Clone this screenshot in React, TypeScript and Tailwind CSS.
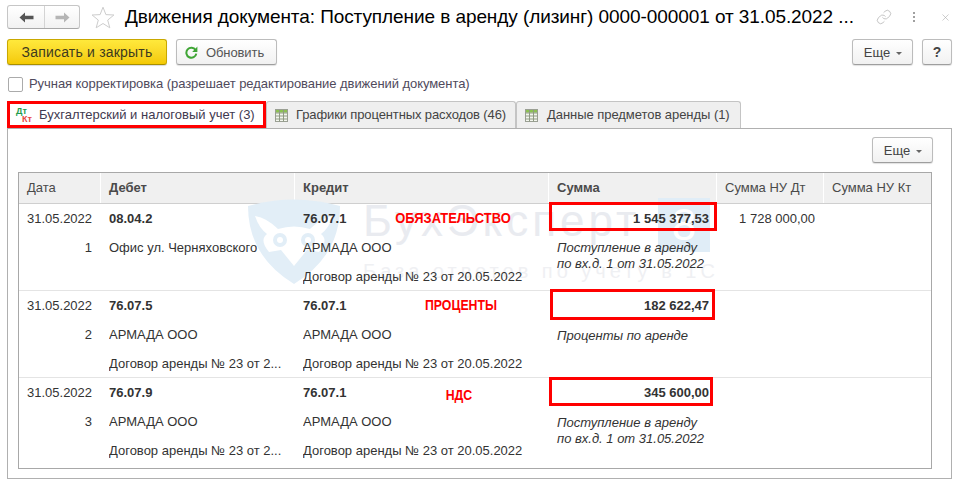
import React from "react";
import { Link, X } from "lucide-react";

const FONT = "font-['Liberation_Sans',Arial,sans-serif]";

function ArrowLeft({ color }: { color: string }) {
  return (
    <svg width="15" height="11" viewBox="0 0 15 11">
      <path d="M0.5 5.5 L6 0.5 V3.8 H14.5 V7.2 H6 V10.5 Z" fill={color} />
    </svg>
  );
}

function ArrowRight({ color }: { color: string }) {
  return (
    <svg width="15" height="11" viewBox="0 0 15 11">
      <path d="M14.5 5.5 L9 0.5 V3.8 H0.5 V7.2 H9 V10.5 Z" fill={color} />
    </svg>
  );
}

function Star() {
  return (
    <svg width="24" height="23" viewBox="0 0 24 23">
      <path
        d="M12 1.2 L14.9 8.6 L22.9 9 L16.7 14.1 L18.8 21.8 L12 17.5 L5.2 21.8 L7.3 14.1 L1.1 9 L9.1 8.6 Z"
        fill="#fff"
        stroke="#cdcdcd"
        strokeWidth="1"
      />
    </svg>
  );
}

function RefreshIcon() {
  return (
    <svg width="13" height="13" viewBox="0 0 13 13">
      <path d="M10.6 4.1 A5 5 0 1 0 11.3 7.6" fill="none" stroke="#3fa535" strokeWidth="2" />
      <path d="M12.4 0.6 V6 H7.2 Z" fill="#3fa535" />
    </svg>
  );
}

function TableIcon() {
  return (
    <svg width="13" height="13" viewBox="0 0 13 13" className="shrink-0">
      <rect x="0.5" y="0.5" width="12" height="12" fill="#f3f6ee" stroke="#9a9f93" />
      <rect x="1" y="1" width="11" height="2.6" fill="#8cc152" />
      <path d="M0.5 4 H12.5 M0.5 7 H12.5 M0.5 10 H12.5 M4.5 1 V12.5 M8.5 1 V12.5" stroke="#8f9a84" strokeWidth="1" />
    </svg>
  );
}

function Caret() {
  return <span className="ml-[6px] mt-[1px] inline-block h-0 w-0 border-x-[3px] border-t-[3px] border-x-transparent border-t-[#666]" />;
}

function MoreButton() {
  return (
    <button className="flex h-[26px] w-[61px] items-center justify-center rounded-[3px] border border-[#bcbcbc] border-b-[#9e9e9e] bg-gradient-to-b from-white to-[#f1f1f1] pl-[1px] pt-[1px] text-[13px] text-[#444] shadow-[0_1px_1px_rgba(0,0,0,0.12)]">
      Еще
      <Caret />
    </button>
  );
}

function Watermark() {
  return (
    <div className="pointer-events-none absolute left-[228px] top-[25px] h-[90px] w-[470px] select-none">
      <svg width="94" height="86" viewBox="0 0 94 86" className="absolute left-0 top-0">
        <path d="M1 8 Q47 -5 93 8 Q93 58 47 86 Q1 58 1 8 Z" fill="#e2eef7" />
        <path
          d="M8 18 Q20 20 31 31 Q47 26 63 31 Q74 20 86 18 Q82 30 74 36 Q82 42 72 54 L60 52 L47 68 L34 52 L22 54 Q12 42 20 36 Q12 30 8 18 Z"
          fill="#fff"
        />
        <circle cx="33" cy="42" r="7" fill="#e2eef7" />
        <circle cx="61" cy="42" r="7" fill="#e2eef7" />
        <circle cx="33" cy="42" r="3" fill="#fff" />
        <circle cx="61" cy="42" r="3" fill="#fff" />
      </svg>
      <div className="absolute left-[411px] top-0 flex h-[54px] w-[52px] items-center justify-center bg-[#e0edf7] text-[44px] leading-none text-white">8</div>
      <div className="absolute left-[116px] top-[-3px] whitespace-nowrap text-[44px] leading-[52px] tracking-[4px] text-[#e9ebf0]">БухЭксперт</div>
      <div className="absolute left-[116px] top-[61px] whitespace-nowrap text-[20px] leading-[24px] tracking-[4px] text-[#eff0f3]">База ответов по учету в 1С</div>
    </div>
  );
}

function Note({ children, className }: { children: React.ReactNode; className: string }) {
  return (
    <div className={`pointer-events-none absolute whitespace-nowrap text-[15px] font-bold leading-[18px] text-[#ff0000] ${className}`}>
      {children}
    </div>
  );
}

type Row = {
  date: string;
  n: string;
  debit: string[];
  credit: string[];
  sum: string;
  sumNu?: string;
  memo: string[];
  note: string;
  noteClass: string;
  boxClass: string;
  rowClass: string;
  memoClass: string;
};

const rows: Row[] = [
  {
    date: "31.05.2022",
    n: "1",
    debit: ["08.04.2", "Офис ул. Черняховского", ""],
    credit: ["76.07.1", "АРМАДА ООО", "Договор аренды № 23 от 20.05.2022"],
    sum: "1 545 377,53",
    sumNu: "1 728 000,00",
    memo: ["Поступление в аренду", "по вх.д. 1 от 31.05.2022"],
    note: "ОБЯЗАТЕЛЬСТВО",
    noteClass: "left-[88px] top-[5px] w-[140px] text-center scale-x-[0.86]",
    boxClass: "left-[0px] top-[-2px] w-[168px] h-[29px]",
    rowClass: "h-[86px]",
    memoClass: "pt-[7px]",
  },
  {
    date: "31.05.2022",
    n: "2",
    debit: ["76.07.5", "АРМАДА ООО", "Договор аренды № 23 от 2..."],
    credit: ["76.07.1", "АРМАДА ООО", "Договор аренды № 23 от 20.05.2022"],
    sum: "182 622,47",
    memo: ["Проценты по аренде"],
    note: "ПРОЦЕНТЫ",
    noteClass: "left-[106px] top-[5px] w-[120px] text-center scale-x-[0.82]",
    boxClass: "left-[1px] top-[-2px] w-[165px] h-[31px]",
    rowClass: "h-[87px] border-t border-[#e4e4e4]",
    memoClass: "pt-[8px]",
  },
  {
    date: "31.05.2022",
    n: "3",
    debit: ["76.07.9", "АРМАДА ООО", "Договор аренды № 23 от 2..."],
    credit: ["76.07.1", "АРМАДА ООО", "Договор аренды № 23 от 20.05.2022"],
    sum: "345 600,00",
    memo: ["Поступление в аренду", "по вх.д. 1 от 31.05.2022"],
    note: "НДС",
    noteClass: "left-[109px] top-[8px] w-[110px] text-center scale-x-[0.82]",
    boxClass: "left-[0px] top-[-1px] w-[164px] h-[29px]",
    rowClass: "h-[90px] border-t border-[#e4e4e4]",
    memoClass: "pt-[8px]",
  },
];

const GRID = "grid grid-cols-[82px_194px_254px_168px_107px_1fr]";

function HeaderCell({ children, bold, last }: { children: string; bold?: boolean; last?: boolean }) {
  return (
    <div className={`flex h-[30px] items-center bg-[#f0f0f0] pl-[8px] text-[13px] ${bold ? "font-bold" : ""} ${last ? "" : "border-r border-white"} text-[#4a4a4a]`}>
      {children}
    </div>
  );
}

function RowView({ row }: { row: Row }) {
  const line = "h-[29px] leading-[29px] whitespace-nowrap overflow-hidden";
  return (
    <div className={`${GRID} relative text-[13px] text-[#333] ${row.rowClass}`}>
      <div className="pl-[8px] pr-[8px]">
        <div className={line}>{row.date}</div>
        <div className={`${line} pr-[1px] text-right`}>{row.n}</div>
      </div>
      <div className="pl-[8px] pr-[4px]">
        <div className={`${line} font-bold`}>{row.debit[0]}</div>
        <div className={line}>{row.debit[1]}</div>
        <div className={line}>{row.debit[2]}</div>
      </div>
      <div className="relative pl-[8px]">
        <div className={`${line} font-bold`}>{row.credit[0]}</div>
        <div className={line}>{row.credit[1]}</div>
        <div className={line}>{row.credit[2]}</div>
        <Note className={row.noteClass}>{row.note}</Note>
      </div>
      <div className="relative pl-[8px] pr-[8px]">
        <div className={`${line} text-right font-bold`}>{row.sum}</div>
        <div className={`${row.memoClass} text-[13px] italic leading-[15.5px]`}>
          {row.memo.map((m) => (
            <div key={m} className="whitespace-nowrap">{m}</div>
          ))}
        </div>
        <div className={`pointer-events-none absolute border-[3px] border-[#ff0000] ${row.boxClass}`} />
      </div>
      <div className="pr-[9px]">
        <div className={`${line} text-right`}>{row.sumNu ?? ""}</div>
      </div>
      <div />
    </div>
  );
}

function Tab({ label, width, gap, track }: { label: string; width: string; gap: string; track: string }) {
  return (
    <div className={`flex h-[27px] ${width} ${gap} items-center rounded-t-[3px] border border-b-0 border-[#c4c4c4] bg-[#efefef] pl-[8px] text-[13px] text-[#444]`}>
      <TableIcon />
      <span className={`whitespace-nowrap ${track}`}>{label}</span>
    </div>
  );
}

export default function App() {
  return (
    <div className={`${FONT} h-[481px] w-[958px] overflow-hidden bg-white px-[7px] pt-[5px]`}>
      {/* Title bar */}
      <div className="flex h-[24px] items-center">
        <div className="flex h-[24px] w-[73px] items-stretch rounded-[3px] border border-[#c6c6c6] border-b-[#a8a8a8] bg-gradient-to-b from-white to-[#f2f2f2]">
          <div className="flex w-[37px] items-center justify-center border-r border-[#d4d4d4]">
            <ArrowLeft color="#555" />
          </div>
          <div className="flex flex-1 items-center justify-center">
            <ArrowRight color="#b5b5b5" />
          </div>
        </div>
        <div className="ml-[11px] flex">
          <Star />
        </div>
        <div className="ml-[10px] w-[740px] whitespace-nowrap text-[19px] leading-[24px] tracking-[-0.08px] text-black">
          Движения документа: Поступление в аренду (лизинг) 0000-000001 от 31.05.2022 ...
        </div>
        <div className="ml-[11px] flex items-center text-[#a8a8a8]">
          <Link size={16} strokeWidth={1} />
          <div className="ml-[21px] flex flex-col gap-[2px]">
            <span className="h-[2px] w-[2px] bg-[#a0a0a0]" />
            <span className="h-[2px] w-[2px] bg-[#a0a0a0]" />
            <span className="h-[2px] w-[2px] bg-[#a0a0a0]" />
          </div>
          <X size={11} strokeWidth={1.25} className="ml-[25px]" />
        </div>
      </div>

      {/* Command bar */}
      <div className="mt-[10px] flex h-[26px] items-center">
        <button className="h-[26px] w-[160px] rounded-[3px] border border-[#c9a800] border-b-[#a88e00] bg-gradient-to-b from-[#ffe93b] to-[#f4c900] pt-[1px] text-[14px] tracking-[0.2px] text-[#3d3a1e] shadow-[0_1px_1px_rgba(0,0,0,0.15)]">
          Записать и закрыть
        </button>
        <button className="ml-[9px] flex h-[26px] w-[101px] items-center rounded-[3px] border border-[#bcbcbc] border-b-[#9e9e9e] bg-gradient-to-b from-white to-[#f1f1f1] pl-[8px] text-[13px] text-[#555] shadow-[0_1px_1px_rgba(0,0,0,0.12)]">
          <RefreshIcon />
          <span className="ml-[8px] mt-[1px] tracking-[-0.1px]">Обновить</span>
        </button>
        <div className="ml-auto flex gap-[9px]">
          <MoreButton />
          <button className="mr-[-1px] h-[26px] w-[30px] rounded-[3px] border border-[#bcbcbc] border-b-[#9e9e9e] bg-gradient-to-b from-white to-[#f1f1f1] text-[14px] font-bold text-[#444] shadow-[0_1px_1px_rgba(0,0,0,0.12)]">
            ?
          </button>
        </div>
      </div>

      {/* Manual correction */}
      <div className="mt-[11px] flex h-[16px] items-center">
        <span className="ml-[1px] h-[15px] w-[15px] rounded-[2px] border border-[#ababab] bg-white" />
        <span className="ml-[6px] whitespace-nowrap text-[13px] tracking-[-0.06px] text-[#4f4a5c]">
          Ручная корректировка (разрешает редактирование движений документа)
        </span>
      </div>

      {/* Tabs */}
      <div className="mt-[9px] flex h-[27px] items-stretch">
        <div className="flex h-[27px] w-[259px] items-center border-[3px] border-[#ff0000] bg-white pl-[6px] text-[13px] text-[#3f3a50]">
          <span className="relative h-[14px] w-[17px] shrink-0 text-[9px] font-bold leading-[9px]">
            <span className="absolute left-0 top-[-1px] text-[#1f9d4d]">Дт</span>
            <span className="absolute left-[6px] top-[7px] text-[#e8483f]">Кт</span>
          </span>
          <span className="ml-[6px] whitespace-nowrap">Бухгалтерский и налоговый учет (3)</span>
        </div>
        <Tab label="Графики процентных расходов (46)" width="w-[250px]" gap="gap-[8px]" track="tracking-[-0.12px]" />
        <Tab label="Данные предметов аренды (1)" width="w-[225px]" gap="gap-[9px]" track="tracking-[-0.05px]" />
      </div>

      {/* Panel */}
      <div className="h-[351px] w-[945px] border border-[#b0b0b0] px-[10px] pt-[8px]">
        <div className="flex justify-end pr-[8px]">
          <MoreButton />
        </div>
        <div className="relative mt-[9px] h-[297px] w-[914px] border border-[#a8a8a8]">
          <div className={`${GRID} border-b border-[#cfcfcf]`}>
            <HeaderCell>Дата</HeaderCell>
            <HeaderCell bold>Дебет</HeaderCell>
            <HeaderCell bold>Кредит</HeaderCell>
            <HeaderCell bold>Сумма</HeaderCell>
            <HeaderCell>Сумма НУ Дт</HeaderCell>
            <HeaderCell last>Сумма НУ Кт</HeaderCell>
          </div>
          <Watermark />
          {rows.map((r) => (
            <RowView key={r.n} row={r} />
          ))}
        </div>
      </div>
    </div>
  );
}
